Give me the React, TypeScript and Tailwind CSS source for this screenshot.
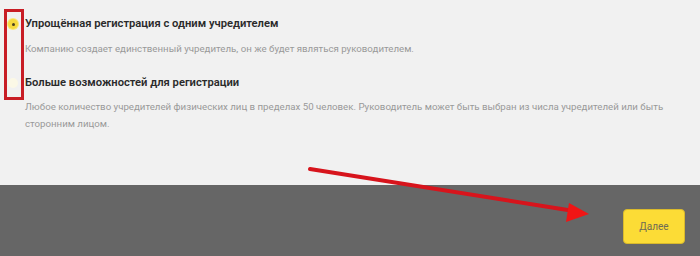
import React from 'react'

const options = [
  {
    id: 'simple',
    title: 'Упрощённая регистрация с одним учредителем',
    text: 'Компанию создает единственный учредитель, он же будет являться руководителем.',
    checked: true,
  },
  {
    id: 'extended',
    title: 'Больше возможностей для регистрации',
    text: 'Любое количество учредителей физических лиц в пределах 50 человек. Руководитель может быть выбран из числа учредителей или быть сторонним лицом.',
    checked: false,
  },
]

function Radio({ checked }: { checked: boolean }) {
  return checked ? (
    <span className="flex h-[10px] w-[10px] shrink-0 items-center justify-center rounded-full bg-[#f6d93f] shadow-[0_0_0_1px_#f9e77c]">
      <span className="h-[3px] w-[3px] rounded-full bg-[#4a4020]" />
    </span>
  ) : (
    <span className="h-[10px] w-[10px] shrink-0 rounded-full bg-[#fbf8e6]" />
  )
}

export default function App() {
  return (
    <div
      className="relative flex h-[256px] w-[700px] flex-col overflow-hidden"
      style={{ fontFamily: 'Roboto, "Noto Sans", sans-serif' }}
    >
      <div className="h-[185px] shrink-0 bg-[#f1f1f1] pl-[8px] pr-[20px] pt-[16px]">
        {options.map((o, i) => (
          <div key={o.id} className={i > 0 ? 'mt-[18px]' : ''}>
            <div className="flex h-[16px] items-center gap-[7px]">
              <Radio checked={o.checked} />
              <span className="text-[11.2px] font-semibold leading-[16px] text-[#2a2a2a]">{o.title}</span>
            </div>
            <p className={`pl-[17px] text-[9.7px] leading-[17px] text-[#999999] ${i === 0 ? 'mt-[8px]' : 'mt-[7px]'}`}>
              {o.text}
            </p>
          </div>
        ))}
      </div>
      <div className="flex flex-1 items-start justify-end bg-[#666666] pr-[15px] pt-[24px]">
        <button className="h-[35px] w-[62px] rounded-[4px] border border-[#d9b92c] bg-[#fcdc36] text-[10px] text-[#6e6b55]">
          Далее
        </button>
      </div>

      {/* annotations */}
      <div className="pointer-events-none absolute left-[4px] top-[9px] h-[91px] w-[20px] border-[3px] border-[#c81d25]" />
      <svg className="pointer-events-none absolute left-0 top-0" width="700" height="256">
        <line x1="310" y1="169" x2="574" y2="211" stroke="#d7141c" strokeWidth="4" strokeLinecap="round" />
        <polygon points="589,214 569,203 566,222" fill="#f01515" />
      </svg>
    </div>
  )
}
